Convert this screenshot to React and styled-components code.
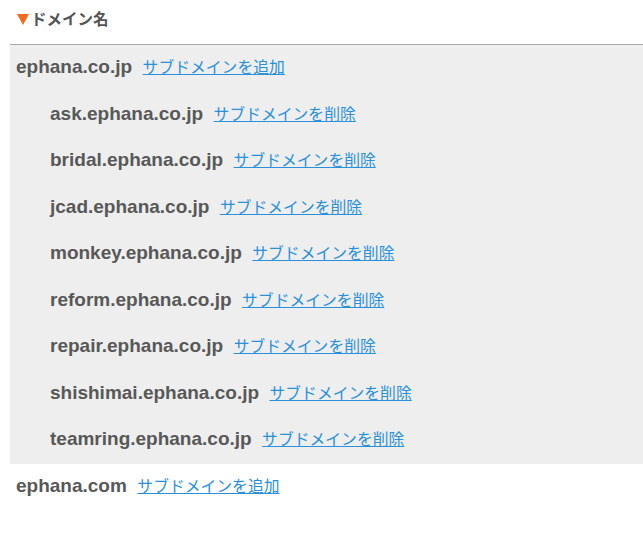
import styled, { createGlobalStyle } from "styled-components";

const GlobalStyle = createGlobalStyle`
  html, body {
    margin: 0;
    padding: 0;
    background: #fff;
  }
  body {
    font-family: "Liberation Sans", Arial, "Noto Sans CJK JP", sans-serif;
  }
`;

const Wrap = styled.div`
  width: 643px;
  height: 543px;
  padding-left: 10px;
  box-sizing: border-box;
`;

const Heading = styled.h2`
  margin: 0;
  height: 45px;
  padding: 10px 0 0 7px;
  box-sizing: border-box;
  font-family: "Liberation Sans", "Noto Sans CJK JP", sans-serif;
  font-size: 15.5px;
  font-weight: bold;
  line-height: 20px;
  color: #555;
  border-bottom: 1px solid #aaa;
  display: flex;
  align-items: flex-start;
`;

const Mark = styled.span`
  width: 0;
  height: 0;
  margin: 4px 2px 0 0;
  border-left: 6px solid transparent;
  border-right: 6px solid transparent;
  border-top: 11px solid #f26b1d;
`;

const Group = styled.div`
  background: ${(p) => (p.open ? "#eeeeee" : "transparent")};
`;

const Row = styled.div`
  display: flex;
  align-items: center;
  height: 46.5px;
  padding-bottom: 3px;
  padding-left: ${(p) => (p.sub ? "40px" : "6px")};
  box-sizing: border-box;
`;

const Line = styled.div`
  white-space: nowrap;
`;

const Name = styled.span`
  font-size: 19px;
  font-weight: bold;
  color: #585858;
  margin-right: 6px;
`;

const Action = styled.a`
  font-family: "Noto Sans CJK JP", sans-serif;
  font-size: 15.8px;
  color: #2a90dc;
  text-decoration: underline;
  cursor: pointer;
`;

const domains = [
  {
    name: "ephana.co.jp",
    subs: [
      "ask.ephana.co.jp",
      "bridal.ephana.co.jp",
      "jcad.ephana.co.jp",
      "monkey.ephana.co.jp",
      "reform.ephana.co.jp",
      "repair.ephana.co.jp",
      "shishimai.ephana.co.jp",
      "teamring.ephana.co.jp",
    ],
  },
  { name: "ephana.com", subs: [] },
];

export default function App() {
  return (
    <>
      <GlobalStyle />
      <Wrap>
        <Heading>
          <Mark />
          ドメイン名
        </Heading>
        {domains.map((d) => (
          <Group key={d.name} open={d.subs.length > 0}>
            <Row>
              <Line>
                <Name>{d.name}</Name> <Action>サブドメインを追加</Action>
              </Line>
            </Row>
            {d.subs.map((s) => (
              <Row sub key={s}>
                <Line>
                  <Name>{s}</Name> <Action>サブドメインを削除</Action>
                </Line>
              </Row>
            ))}
          </Group>
        ))}
      </Wrap>
    </>
  );
}
